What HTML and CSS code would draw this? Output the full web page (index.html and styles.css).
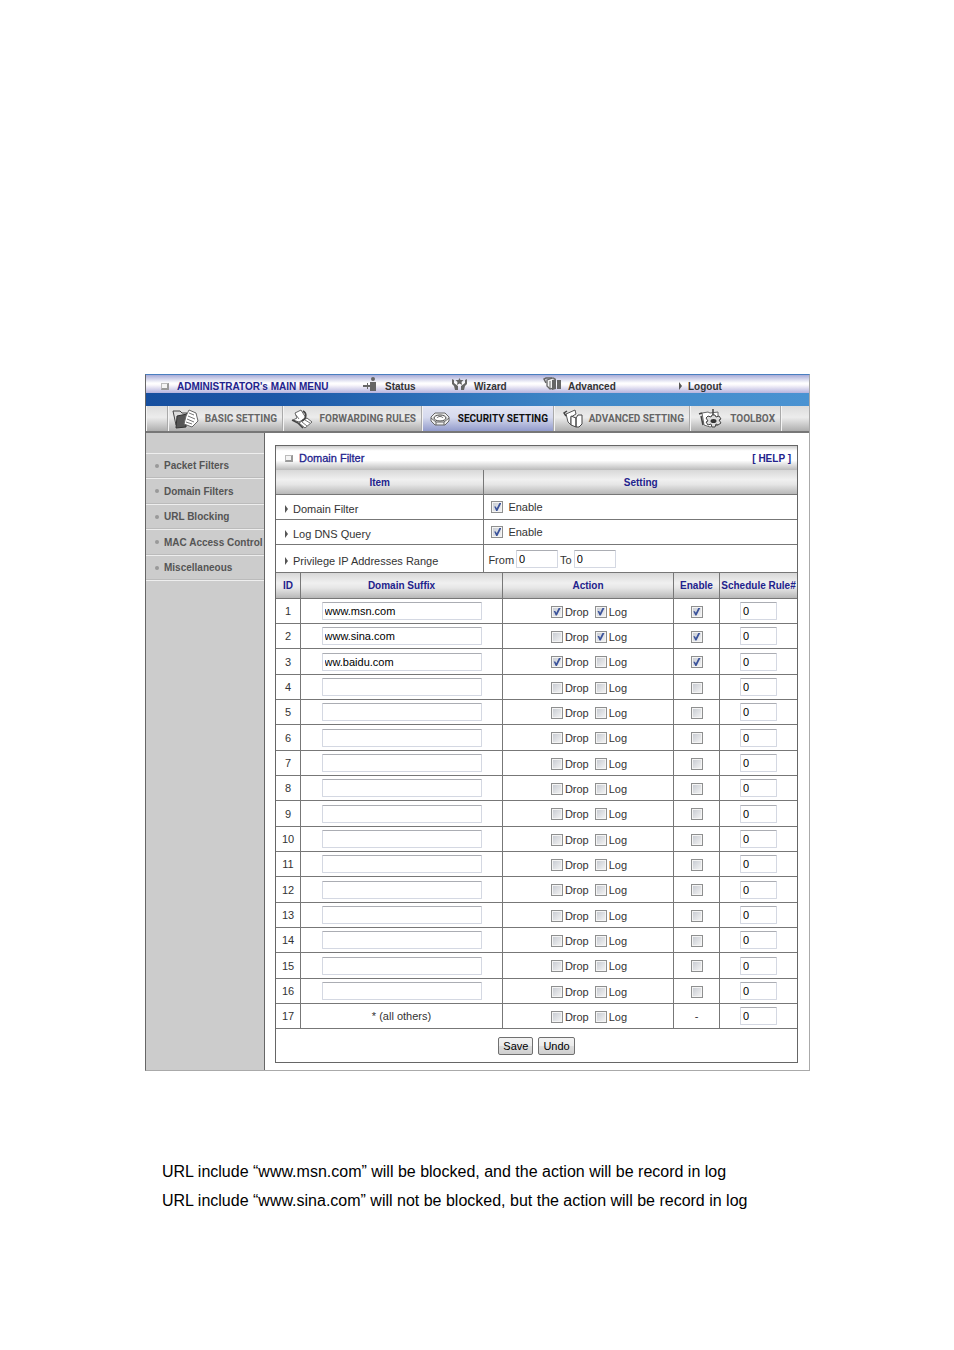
FILE: index.html
```
<!DOCTYPE html>
<html lang="en">
<head>
    <meta charset="UTF-8">
    <meta name="viewport" content="width=device-width, initial-scale=1.0">
    <title>Domain Filter</title>
    <link rel="stylesheet" href="styles.css">
</head>
<body>
    <div class="router">
        <header>
            <nav class="top-menu">
                <div class="brand"><span class="square"></span>ADMINISTRATOR's MAIN MENU</div>
                <a href="#">
                    <svg width="16" height="16" viewBox="0 0 16 16"><circle cx="10" cy="3" r="2" fill="#666"/><path fill="#666" d="M7 6h6v9H7v-4H5v2H4v-2H0V9h4V7h1v2h2z"/></svg>
                    Status
                </a>
                <a href="#">
                    <svg width="17" height="16" viewBox="0 0 17 16"><path fill="#666" d="M1 3l2 1v3l4 3v4H4L3 10 1 8zM16 3l-2 1v3l-4 3v4h3l1-4 2-2zM8.500 2l1 2h3l-2 2 .5 3-2.500-1.500L6 9l.5-3-2-2h3z"/></svg>
                    Wizard
                </a>
                <a href="#">
                    <svg width="19" height="16" viewBox="0 0 19 16"><path fill="#f4f4f4" stroke="#666" stroke-width="1.300" d="M4 4l6-2 2 1v9l-5 1-3-3z"/><path fill="none" stroke="#666" stroke-width="1.500" d="M3 7L1 3l2-1h6"/><path fill="none" stroke="#666" d="M7 5v8"/><path fill="#666" d="M9 4l4-1v10l-4 1zM14 4h4v9h-4z"/></svg>
                    Advanced
                </a>
                <a href="#"><span class="arrow"></span>Logout</a>
            </nav>
            <div class="band"></div>
            <nav class="tabs">
                <span></span>
                <a href="#">
                    <svg width="27" height="22" viewBox="0 0 27 22"><path fill="#ddd" stroke="#444" d="M1 3h7l2 2h5l-2 3-6 11-3-2z"/><path fill="#555" stroke="#333" d="M5 8l10-2-1 13-10 1z"/><path fill="#fff" stroke="#666" d="M17 2l7 3 2 8-6 6-8-3 2-8z"/><path fill="none" stroke="#777" d="M17 5l5 2M16 8l7 3M15 11l7 3M14 14l6 2"/></svg>
                    BASIC SETTING
                </a>
                <a href="#">
                    <svg width="23" height="22" viewBox="0 0 23 22"><path fill="#fff" stroke="#666" d="M4 5l6-3 5 8-7 4-6-2 4-2zM8 15l8-5 5 4-7 6z"/><path fill="none" stroke="#444" stroke-width="1.500" d="M12 3c4 2 4 7-1 10M1 12l6 3 5 5"/><path stroke="#777" d="M11 14l5 4M14 12l5 3M5 7l3 4"/></svg>
                    FORWARDING RULES
                </a>
                <a href="#" class="active">
                    <svg width="20" height="22" viewBox="0 0 20 22"><path fill="#eee" stroke="#666" d="M1 9l4-4h10l4 4v4l-4 4H5l-4-4z"/><ellipse cx="10" cy="10" rx="6" ry="3" fill="#fff" stroke="#444"/><path fill="none" stroke="#666" d="M1 10l5 4h8l5-4M6 14v3M14 14v3M7 10c1-2 5-2 6 0"/></svg>
                    SECURITY SETTING
                </a>
                <a href="#">
                    <svg width="20" height="22" viewBox="0 0 20 22"><path fill="#fff" stroke="#555" d="M3 6l9-4 1 4-5 3v8l-3-3z"/><path fill="none" stroke="#444" stroke-width="1.500" d="M3 8L1 5l3-2"/><path fill="#fff" stroke="#444" d="M8 8l5 2v9l-5-2zM13 10l2-3h4v9l-3 3h-3z"/></svg>
                    ADVANCED SETTING
                </a>
                <a href="#">
                    <svg width="26" height="22" viewBox="0 0 26 22"><path fill="#fff" stroke="#666" d="M4 5l6-1 2 1 8-1v13l-8 2-6-2z"/><path fill="none" stroke="#444" stroke-width="1.500" d="M1 6l3-1M3 8l2 9M15 1v6"/><path fill="#ddd" stroke="#444" d="M14 7h3l1 2 3-1 2 3-2 1 2 3-3 2-2-1-1 3h-3l-1-3-3 1-2-3 2-1-2-3 2-2 3 1z"/><ellipse cx="15.500" cy="13" rx="3" ry="2" fill="#333"/></svg>
                    TOOLBOX
                </a>
                <span></span>
            </nav>
        </header>

        <div class="content">
            <ul class="sidebar">
                <li><a href="#">Packet Filters</a></li>
                <li><a href="#">Domain Filters</a></li>
                <li><a href="#">URL Blocking</a></li>
                <li><a href="#">MAC Access Control</a></li>
                <li><a href="#">Miscellaneous</a></li>
            </ul>

            <form class="panel">
                <div class="panel-title">
                    <span class="square"></span>
                    <h1>Domain Filter</h1>
                    <a href="#">[ HELP ]</a>
                </div>
                <table class="settings">
                    <tr><th class="item">Item</th><th>Setting</th></tr>
                    <tr>
                        <td><span class="arrow"></span>Domain Filter</td>
                        <td><label><input type="checkbox" checked>Enable</label></td>
                    </tr>
                    <tr>
                        <td><span class="arrow"></span>Log DNS Query</td>
                        <td><label><input type="checkbox" checked>Enable</label></td>
                    </tr>
                    <tr class="range">
                        <td><span class="arrow"></span>Privilege IP Addresses Range</td>
                        <td>
                            <div class="fields">
                                <label for="from">From</label><input type="text" id="from" value="0">
                                <label for="to">To</label><input type="text" id="to" value="0">
                            </div>
                        </td>
                    </tr>
                </table>
                <table class="rules">
                    <thead>
                        <tr>
                            <th class="id">ID</th>
                            <th class="suffix">Domain Suffix</th>
                            <th class="action">Action</th>
                            <th class="enable">Enable</th>
                            <th class="schedule">Schedule Rule#</th>
                        </tr>
                    </thead>
                    <tbody id="rules"></tbody>
                </table>
                <div class="buttons">
                    <button type="button">Save</button>
                    <button type="button">Undo</button>
                </div>
            </form>
        </div>
    </div>

    <div class="notes">
        <p>URL include “www.msn.com” will be blocked, and the action will be record in log</p>
        <p>URL include “www.sina.com” will not be blocked, but the action will be record in log</p>
    </div>

    <script>
        const rules = [
            { suffix: 'www.msn.com', drop: true, log: true, enable: true },
            { suffix: 'www.sina.com', drop: false, log: true, enable: true },
            { suffix: 'ww.baidu.com', drop: true, log: false, enable: true }
        ];
        const total = 17;

        function checkbox(checked, label) {
            return `<input type="checkbox" aria-label="${label}" ${checked ? 'checked' : ''}>`;
        }

        let html = '';
        for (let id = 1; id <= total; id++) {
            const rule = rules[id - 1] || { suffix: '' };
            const last = id === total;
            html += `<tr>
                <td>${id}</td>
                <td>${last ? '* (all others)' : `<input type="text" aria-label="Domain suffix ${id}" value="${rule.suffix}">`}</td>
                <td><div class="checks">
                    <label>${checkbox(rule.drop, 'Drop')}Drop</label>
                    <label>${checkbox(rule.log, 'Log')}Log</label>
                </div></td>
                <td>${last ? '-' : checkbox(rule.enable, 'Enable rule ' + id)}</td>
                <td><input type="text" class="short" aria-label="Schedule rule ${id}" value="0"></td>
            </tr>`;
        }
        document.getElementById('rules').innerHTML = html;
    </script>
</body>
</html>
```
FILE: styles.css
```
* {
    margin: 0;
    padding: 0;
    box-sizing: border-box;
}

body {
    font-family: "Liberation Sans", Arial, sans-serif;
    font-size: 11px;
    color: #333;
    background: #fff;
    padding: 374px 144px 130px 145px;
}

a {
    color: inherit;
    text-decoration: none;
}

.router {
    border: 1px solid #aaa;
    border-left-color: #666;
    border-top-color: #4a7fc0;
}

.square {
    width: 8px;
    height: 7px;
    border: 1px solid #bbb;
    border-right: 2px solid #999;
    border-bottom: 2px solid #999;
    background: #f4f4f4;
}

.arrow {
    display: inline-block;
    width: 0;
    height: 0;
    border: 4px solid transparent;
    border-left: 3px solid #555;
    border-right: 0;
    margin-right: 5px;
}

/* header */
.top-menu {
    display: grid;
    grid-template-columns: 217px 88px 92px 136px 1fr;
    align-items: center;
    height: 18px;
    padding-top: 4px;
    background: linear-gradient(#a9acd8, #fff 45%, #fbf9fc 55%, #b5b3de);
    font-size: 10px;
    font-weight: bold;
    white-space: nowrap;
}

.top-menu .brand {
    display: flex;
    align-items: center;
    gap: 8px;
    padding-left: 15px;
    color: #22228c;
}

.top-menu a {
    display: flex;
    align-items: center;
    gap: 6px;
}

.top-menu svg {
    margin-top: -4px;
}

.top-menu .arrow {
    margin-right: 0;
}

.band {
    height: 13px;
    background: linear-gradient(90deg, #164f9f, #1b58a8 20%, #2f72ba 45%, #4088c8 65%, #4a93d2);
}

.tabs {
    display: grid;
    grid-template-columns: 22px 115px 139px 132px 136px 91px 1fr;
    height: 27px;
    background: linear-gradient(#dcdcdc, #ececec 45%, #aeaeae);
    border-bottom: 2px solid #777;
    font-family: Roboto, "Liberation Sans", sans-serif;
    font-size: 10px;
    font-weight: bold;
    color: #666;
    white-space: nowrap;
}

.tabs > * {
    display: flex;
    align-items: center;
    border-right: 1px solid #aaa;
    box-shadow: inset 1px 0 #f4f4f4;
}

.tabs > :last-child {
    border-right: 0;
}

.tabs a {
    justify-content: flex-end;
    gap: 6px;
    padding-right: 5px;
}

.tabs .active {
    gap: 8px;
    color: #111;
    background: linear-gradient(#e2e4f2, #d6daee 45%, #929bcb);
}

/* body */
.content {
    display: flex;
}

.sidebar {
    width: 119px;
    flex-shrink: 0;
    padding-top: 20px;
    background: #ccc;
    border-right: 1px solid #666;
    list-style: none;
    font-size: 10px;
    font-weight: bold;
    color: #555;
}

.sidebar li {
    display: flex;
    align-items: center;
    gap: 5px;
    height: 25px;
    padding-left: 9px;
    border-top: 1px solid #eee;
    border-bottom: 1px solid #bbb;
    white-space: nowrap;
}

.sidebar li:nth-child(even) {
    height: 26px;
}

.sidebar li:last-child {
    box-shadow: 0 1px #eee;
}

.sidebar li::before {
    content: "";
    width: 4px;
    height: 4px;
    border-radius: 50%;
    background: #999;
}

.panel {
    flex: 1;
    margin: 12px 11px 7px 10px;
    border: 1px solid #666;
}

.panel-title {
    display: flex;
    align-items: center;
    height: 24px;
    padding: 0 6px 0 9px;
    background: linear-gradient(#ccc, #fff 20%, #fff 60%, #bbb);
    color: #22228c;
}

.panel-title h1 {
    flex: 1;
    margin-left: 6px;
    font-size: 11px;
    font-weight: normal;
    -webkit-text-stroke: 0.3px;
}

.panel-title a {
    font-size: 10px;
    font-weight: bold;
}

table {
    width: 100%;
    border-spacing: 0;
    table-layout: fixed;
}

th,
td {
    height: 25px;
    border-right: 1px solid #777;
    border-bottom: 1px solid #777;
}

th:last-child,
td:last-child {
    border-right: 0;
}

th {
    background: linear-gradient(#d8d8d8, #f0f0f0 40%, #e6e6e6 60%, #b8b8b8);
    color: #22228c;
    font-size: 10px;
    white-space: nowrap;
}

.settings .item {
    width: 40%;
}

.settings td {
    padding: 4px 0 0 9px;
}

.settings td:last-child {
    padding: 2px 0 0 7px;
}

.settings td:last-child input[type="checkbox"] {
    margin-right: 5px;
}

.settings .range td {
    height: 28px;
}

.settings .range td:last-child {
    padding: 0 0 0 4px;
}

.fields {
    display: flex;
    align-items: center;
    gap: 2px;
}

.fields label {
    padding-top: 3px;
}

.fields input[type="text"] {
    width: 42px;
}

label {
    display: inline-flex;
    align-items: center;
}

.rules td {
    text-align: center;
}

.rules th {
    height: 26px;
}

.rules .id {
    width: 25px;
}

.rules .action {
    width: 171px;
}

.rules .enable {
    width: 46px;
}

.rules .schedule {
    width: 77px;
}

.rules tbody tr:nth-child(3n) td {
    height: 26px;
}

.checks {
    display: flex;
    justify-content: center;
    gap: 6px;
    padding: 1px 0 0 2px;
}

.checks label {
    gap: 2px;
}

input[type="text"] {
    width: 160px;
    height: 18px;
    padding: 0 2px;
    border: 1px solid #d4d8e2;
    border-top-color: #abadb3;
    border-radius: 1px;
    background: #fff;
    font-family: inherit;
    font-size: 11px;
    color: #000;
    vertical-align: middle;
}

input.short {
    width: 37px;
}

input[type="checkbox"] {
    appearance: none;
    position: relative;
    width: 12px;
    height: 12px;
    border: 1px solid #8e8f8f;
    background: linear-gradient(135deg, #c4c8cf, #f6f6f6);
    box-shadow: inset 0 0 0 1px #f4f4f4;
    vertical-align: middle;
}

input[type="checkbox"]:checked::after {
    content: "";
    position: absolute;
    inset: 1px;
    background: #3b539b;
    clip-path: polygon(10% 45%, 30% 45%, 42% 65%, 75% 0, 100% 0, 50% 100%, 35% 100%);
}

.buttons {
    display: flex;
    justify-content: center;
    align-items: center;
    gap: 5px;
    height: 33px;
}

button {
    height: 18px;
    padding: 0 4px;
    border: 1px solid #707070;
    border-radius: 2px;
    background: linear-gradient(#f2f2f2, #ebebeb 50%, #ddd 50%, #cfcfcf);
    font-family: inherit;
    font-size: 11px;
    color: #000;
}

.notes {
    padding: 86px 0 0 17px;
    font-size: 16px;
    line-height: 29px;
    color: #000;
    white-space: nowrap;
}
```
